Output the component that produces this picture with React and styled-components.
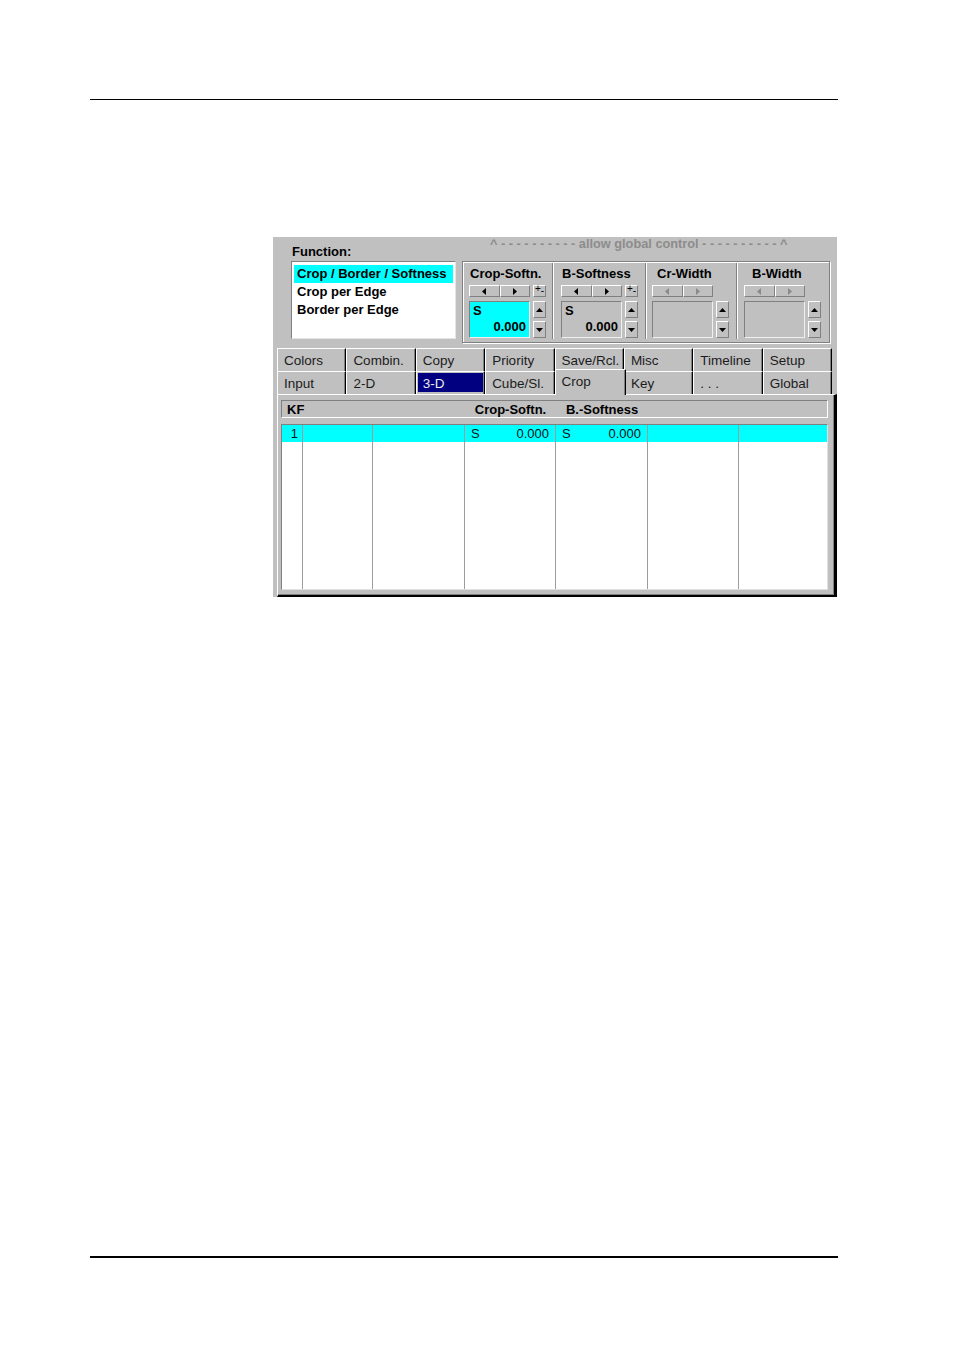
import React from 'react';
import styled, { createGlobalStyle } from 'styled-components';

const Global = createGlobalStyle`
  html, body { margin: 0; padding: 0; background: #fff; }
  body { font-family: "Liberation Sans", Arial, sans-serif; }
`;

const GREY = '#c0c0c0';
const COLS = '21px 70px 92px 91px 92px 91px 88px';

const Page = styled.div`
  width: 954px;
  height: 1348px;
  box-sizing: border-box;
  padding-top: 99px;
  background: #fff;
  overflow: hidden;
`;

const Rule = styled.div`
  margin-left: 90px;
  width: 748px;
  height: ${p => p.$thick}px;
  background: #000;
  margin-top: ${p => p.$top || 0}px;
`;

const Panel = styled.div`
  margin: 137px 0 0 273px;
  width: 564px;
  height: 360px;
  box-sizing: border-box;
  background: ${GREY};
  display: flex;
  flex-direction: column;
  font-family: "Liberation Sans", Arial, sans-serif;
  color: #000;
`;

const TopSection = styled.div`
  display: flex;
  height: 106px;
`;

const FunctionCol = styled.div`
  margin-left: 18px;
  padding-top: 7px;
  width: 165px;
`;

const FuncLabel = styled.div`
  font-weight: bold;
  font-size: 13px;
  line-height: 15px;
  height: 15px;
  padding-left: 1px;
  margin-bottom: 2px;
`;

const ListBox = styled.div`
  width: 165px;
  height: 78px;
  box-sizing: border-box;
  background: #fff;
  border-top: 1px solid #808080;
  border-left: 1px solid #808080;
  border-right: 1px solid #e4e4e4;
  border-bottom: 1px solid #e4e4e4;
  padding: 3px 2px 0 2px;
`;

const ListItem = styled.div`
  height: 18px;
  line-height: 18px;
  padding-left: 3px;
  font-weight: bold;
  font-size: 13px;
  white-space: nowrap;
  background: ${p => (p.$sel ? '#00ffff' : 'transparent')};
`;

const ControlCol = styled.div`
  margin-left: 6px;
  display: flex;
  flex-direction: column;
`;

const GlobalText = styled.div`
  height: 14px;
  line-height: 14px;
  font-size: 12.75px;
  font-weight: bold;
  color: #8c8c8c;
  padding-left: 28px;
  margin-bottom: 10px;
  white-space: pre;
`;

const GroupBox = styled.div`
  width: 368px;
  height: 82px;
  box-sizing: border-box;
  border: 1px solid #808080;
  box-shadow: inset 1px 1px 0 #fff, 1px 1px 0 #fff;
  display: flex;
`;

const Column = styled.div`
  width: ${p => p.$w}px;
  box-sizing: border-box;
  padding: 5px 0 0 ${p => p.$pad}px;
`;

const Divider = styled.div`
  width: 1px;
  background: #808080;
  border-right: 1px solid #fff;
  margin: 1px 0 3px;
`;

const ColLabel = styled.div`
  font-weight: bold;
  font-size: 13px;
  line-height: 14px;
  height: 14px;
  padding-left: ${p => p.$indent}px;
  white-space: nowrap;
`;

const Controls = styled.div`
  margin-top: 4px;
  display: grid;
  grid-template-columns: 61px 13px;
  grid-template-rows: 12px 37px;
  column-gap: 3px;
  row-gap: 4px;
`;

const Bevel = styled.div`
  box-sizing: border-box;
  background: ${GREY};
  border-top: 1px solid #fff;
  border-left: 1px solid #fff;
  border-right: 1px solid #808080;
  border-bottom: 1px solid #808080;
  display: flex;
  align-items: center;
  justify-content: center;
`;

const ArrowPair = styled.div`
  display: flex;
`;

const ArrowBtn = styled(Bevel)`
  flex: 1;
`;

const PMBtn = styled(Bevel)`
  font-size: 10px;
  line-height: 8px;
  align-items: stretch;
  justify-content: flex-start;
  padding-left: 1px;
`;

const Plus = styled.span`
  align-self: flex-start;
  margin-top: -1px;
`;

const Minus = styled.span`
  align-self: flex-end;
  margin-bottom: 1px;
`;

const ValueBox = styled.div`
  box-sizing: border-box;
  height: 37px;
  background: ${p => (p.$cyan ? '#00ffff' : GREY)};
  border-top: 1px solid #808080;
  border-left: 1px solid #808080;
  border-right: 1px solid #f0f0f0;
  border-bottom: 1px solid #f0f0f0;
  display: flex;
  flex-direction: column;
  justify-content: space-between;
  padding: 1px 3px 3px 3px;
  font-weight: bold;
  font-size: 13px;
  line-height: 15px;
`;

const ValueNum = styled.div`
  text-align: right;
`;

const Spin = styled.div`
  display: flex;
  flex-direction: column;
  gap: 3px;
`;

const SpinBtn = styled(Bevel)`
  height: 17px;
`;

const Tabs = styled.div`
  margin: 5px 0 0 4px;
  width: 555px;
  display: grid;
  grid-template-columns: repeat(8, 1fr);
  grid-template-rows: 23px 23px;
`;

const Tab = styled.div`
  box-sizing: border-box;
  border-top: 1px solid #fff;
  border-left: 1px solid #fff;
  border-right: 1px solid #000;
  background: ${p => (p.$active ? '#000080' : GREY)};
  box-shadow: ${p =>
    p.$active
      ? `inset -1px 0 0 #808080, inset 1px 1px 0 ${GREY}, inset 0 -2px 0 ${GREY}`
      : 'inset -1px 0 0 #808080'};
  color: ${p => (p.$active ? '#ececec' : '#1c1c1c')};
  font-size: 13.5px;
  line-height: 16px;
  padding: 4px 0 0 6px;
  white-space: nowrap;
  ${p =>
    p.$selected &&
    `
    margin: -2px -2px -1px 0;
    position: relative;
    z-index: 1;
  `}
`;

const Content = styled.div`
  margin-left: 4px;
  width: 560px;
  height: 203px;
  box-sizing: border-box;
  border-top: 1px solid #fff;
  border-left: 1px solid #fff;
  border-right: 3px solid #000;
  border-bottom: 2px solid #000;
  box-shadow: inset -1px -1px 0 #808080;
  padding: 5px 0 0 3px;
`;

const Header = styled.div`
  display: grid;
  grid-template-columns: ${COLS};
  width: 547px;
  height: 18px;
  box-sizing: border-box;
  border-top: 1px solid #808080;
  border-left: 1px solid #808080;
  border-right: 1px solid #fff;
  border-bottom: 1px solid #fff;
  font-weight: bold;
  font-size: 13px;
  line-height: 16px;
  padding-top: 1px;
`;

const HeaderCell = styled.div`
  text-align: ${p => p.$align || 'center'};
  padding-left: ${p => (p.$align === 'left' ? 5 : 0)}px;
  white-space: nowrap;
`;

const Table = styled.div`
  margin-top: 6px;
  width: 547px;
  height: 166px;
  box-sizing: border-box;
  border-top: 1px solid #808080;
  border-left: 1px solid #808080;
  border-right: 1px solid #e0e0e0;
  border-bottom: 1px solid #e0e0e0;
  background: #fff;
  display: grid;
  grid-template-columns: ${COLS};
  grid-template-rows: 17px 1fr;
`;

const Cell = styled.div`
  box-sizing: border-box;
  border-right: ${p => (p.$last ? 'none' : '1px solid #9c9c9c')};
  background: ${p => (p.$hl ? '#00ffff' : '#fff')};
  font-size: 13px;
  line-height: 16px;
  color: #111;
  display: flex;
  justify-content: ${p => (p.$right ? 'flex-end' : 'space-between')};
  padding: 1px ${p => (p.$right ? 4 : 6)}px 0 6px;
  white-space: nowrap;
`;

const Tri = ({ dir, color = '#000' }) => {
  const shapes = {
    left: { w: 4, h: 7, pts: '4,0 0,3.5 4,7' },
    right: { w: 4, h: 7, pts: '0,0 4,3.5 0,7' },
    up: { w: 7, h: 4, pts: '0,4 3.5,0 7,4' },
    down: { w: 7, h: 4, pts: '0,0 3.5,4 7,0' },
  };
  const s = shapes[dir];
  return (
    <svg width={s.w} height={s.h} viewBox={`0 0 ${s.w} ${s.h}`}>
      <polygon points={s.pts} fill={color} />
    </svg>
  );
};

const columns = [
  { label: 'Crop-Softn.', w: 89, pad: 6, indent: 1, value: true, cyan: true, pm: true, enabled: true },
  { label: 'B-Softness', w: 91, pad: 7, indent: 1, value: true, cyan: false, pm: true, enabled: true },
  { label: 'Cr-Width', w: 89, pad: 5, indent: 5, value: false, pm: false, enabled: false },
  { label: 'B-Width', w: 91, pad: 6, indent: 8, value: false, pm: false, enabled: false },
];

const row1 = ['Colors', 'Combin.', 'Copy', 'Priority', 'Save/Rcl.', 'Misc', 'Timeline', 'Setup'];
const row2 = ['Input', '2-D', '3-D', 'Cube/Sl.', 'Crop', 'Key', '. . .', 'Global'];

const dashes = Array(10).fill('-').join(' ');

export default function App() {
  return (
    <>
      <Global />
      <Page>
        <Rule $thick={1} />
        <Panel>
          <TopSection>
            <FunctionCol>
              <FuncLabel>Function:</FuncLabel>
              <ListBox>
                <ListItem $sel>Crop / Border / Softness</ListItem>
                <ListItem>Crop per Edge</ListItem>
                <ListItem>Border per Edge</ListItem>
              </ListBox>
            </FunctionCol>
            <ControlCol>
              <GlobalText>{`^ ${dashes} allow global control ${dashes} ^`}</GlobalText>
              <GroupBox>
                {columns.map((c, i) => (
                  <React.Fragment key={c.label}>
                    {i > 0 && <Divider />}
                    <Column $w={c.w} $pad={c.pad}>
                      <ColLabel $indent={c.indent}>{c.label}</ColLabel>
                      <Controls>
                        <ArrowPair>
                          <ArrowBtn><Tri dir="left" color={c.enabled ? '#000' : '#8a8a8a'} /></ArrowBtn>
                          <ArrowBtn><Tri dir="right" color={c.enabled ? '#000' : '#8a8a8a'} /></ArrowBtn>
                        </ArrowPair>
                        {c.pm ? (
                          <PMBtn>
                            <Plus>+</Plus>
                            <Minus>-</Minus>
                          </PMBtn>
                        ) : (
                          <div />
                        )}
                        <ValueBox $cyan={c.cyan}>
                          {c.value && (
                            <>
                              <div>S</div>
                              <ValueNum>0.000</ValueNum>
                            </>
                          )}
                        </ValueBox>
                        <Spin>
                          <SpinBtn><Tri dir="up" /></SpinBtn>
                          <SpinBtn><Tri dir="down" /></SpinBtn>
                        </Spin>
                      </Controls>
                    </Column>
                  </React.Fragment>
                ))}
              </GroupBox>
            </ControlCol>
          </TopSection>

          <Tabs>
            {row1.map(t => (
              <Tab key={t}>{t}</Tab>
            ))}
            {row2.map(t => (
              <Tab key={t} $active={t === '3-D'} $selected={t === 'Crop'}>
                {t}
              </Tab>
            ))}
          </Tabs>

          <Content>
            <Header>
              <HeaderCell $align="left">KF</HeaderCell>
              <HeaderCell />
              <HeaderCell />
              <HeaderCell>Crop-Softn.</HeaderCell>
              <HeaderCell>B.-Softness</HeaderCell>
              <HeaderCell />
              <HeaderCell />
            </Header>
            <Table>
              <Cell $hl $right>1</Cell>
              <Cell $hl />
              <Cell $hl />
              <Cell $hl><span>S</span><span>0.000</span></Cell>
              <Cell $hl><span>S</span><span>0.000</span></Cell>
              <Cell $hl />
              <Cell $hl $last />
              {Array.from({ length: 7 }).map((_, i) => (
                <Cell key={i} $last={i === 6} />
              ))}
            </Table>
          </Content>
        </Panel>
        <Rule $thick={2} $top={659} />
      </Page>
    </>
  );
}
